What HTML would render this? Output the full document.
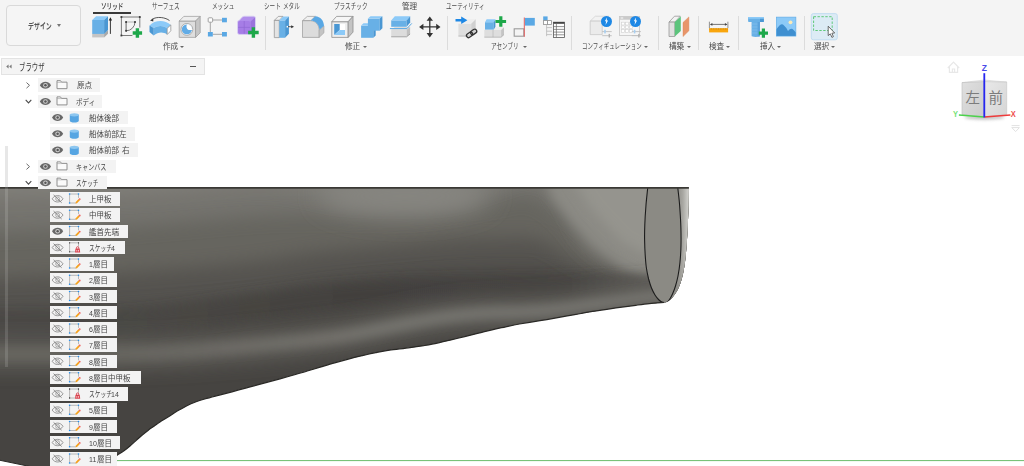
<!DOCTYPE html><html lang="ja"><head><meta charset="utf-8"><title>Fusion</title><style>
*{box-sizing:border-box;margin:0;padding:0}
html,body{width:1024px;height:466px;overflow:hidden;background:#fff}
body{font-family:"Liberation Sans","Noto Sans CJK JP",sans-serif;position:relative;color:#4a4a4a}
.abs{position:absolute}
.c{display:inline-block;transform-origin:0 50%}
#tb{position:absolute;left:0;top:0;width:1024px;height:56px;background:#f4f4f4}
.tab{position:absolute;top:2px;font-size:8px;line-height:10px;white-space:nowrap;color:#4a4a4a}
.lbl{position:absolute;top:42.4px;font-size:8px;line-height:10px;white-space:nowrap;color:#4c4c4c}
.arr{position:absolute;top:46px;width:0;height:0;border-left:2px solid transparent;border-right:2px solid transparent;border-top:2.5px solid #666}
.sep{position:absolute;top:16px;width:1px;height:34px;background:#dcdcdc}
.ic{position:absolute;top:14px;width:26px;height:26px}
.row{position:absolute;height:13px;background:#f3f3f3}
.rt{position:absolute;font-size:8px;line-height:13px;white-space:nowrap;color:#454545}
</style></head><body>
<div id="tb">
<div class="abs" style="left:6px;top:5px;width:75px;height:41px;border:1px solid #d9d9d9;border-radius:4px;background:#f5f5f5"></div>
<div class="abs" style="left:29.2px;top:21.2px;font-size:8.5px;line-height:10px;font-weight:bold;color:#555;white-space:nowrap"><span class="c" style="margin-left:-0.8px;transform:scaleX(0.7);margin-right:-10.20px">デザイン</span></div>
<div class="abs" style="left:56.6px;top:24.3px;width:0;height:0;border-left:2px solid transparent;border-right:2px solid transparent;border-top:3px solid #777"></div>
<div class="tab" style="left:101.3px;font-weight:500;color:#2e2e2e"><span class="c" style="margin-left:-0.8px;transform:scaleX(0.7);margin-right:-9.60px">ソリッド</span></div>
<div class="tab" style="left:153px"><span class="c" style="margin-left:-0.8px;transform:scaleX(0.7);margin-right:-12.00px">サーフェス</span></div>
<div class="tab" style="left:212.9px"><span class="c" style="margin-left:-0.8px;transform:scaleX(0.7);margin-right:-9.60px">メッシュ</span></div>
<div class="tab" style="left:264.8px"><span class="c" style="margin-left:-0.8px;transform:scaleX(0.7);margin-right:-7.20px">シート</span>&nbsp;<span class="c" style="transform:scaleX(0.7);margin-right:-7.20px">メタル</span></div>
<div class="tab" style="left:334.7px"><span class="c" style="margin-left:-0.8px;transform:scaleX(0.7);margin-right:-14.40px">プラスチック</span></div>
<div class="tab" style="left:401.5px"><span class="c" style="transform:scaleX(0.95);margin-right:-0.80px">管理</span></div>
<div class="tab" style="left:447.2px"><span class="c" style="margin-left:-0.8px;transform:scaleX(0.7);margin-right:-16.80px">ユーティリティ</span></div>
<div class="abs" style="left:92.5px;top:11.5px;width:38.5px;height:2px;background:#3a3a3a"></div>
<div class="lbl" style="left:163.4px"><span class="c" style="transform:scaleX(0.95);margin-right:-0.80px">作成</span></div><div class="arr" style="left:180.1px"></div>
<div class="lbl" style="left:345.2px"><span class="c" style="transform:scaleX(0.95);margin-right:-0.80px">修正</span></div><div class="arr" style="left:363px"></div>
<div class="lbl" style="left:491.7px"><span class="c" style="margin-left:-0.8px;transform:scaleX(0.7);margin-right:-12.00px">アセンブリ</span></div><div class="arr" style="left:522.5px"></div>
<div class="lbl" style="left:583.1px"><span class="c" style="margin-left:-0.8px;transform:scaleX(0.685);margin-right:-27.72px">コンフィギュレーション</span></div><div class="arr" style="left:644.4px"></div>
<div class="lbl" style="left:668.7px"><span class="c" style="transform:scaleX(0.95);margin-right:-0.80px">構築</span></div><div class="arr" style="left:686.6px"></div>
<div class="lbl" style="left:709.2px"><span class="c" style="transform:scaleX(0.95);margin-right:-0.80px">検査</span></div><div class="arr" style="left:726.2px"></div>
<div class="lbl" style="left:760.3px"><span class="c" style="transform:scaleX(0.95);margin-right:-0.80px">挿入</span></div><div class="arr" style="left:777px"></div>
<div class="lbl" style="left:814.2px"><span class="c" style="transform:scaleX(0.95);margin-right:-0.80px">選択</span></div><div class="arr" style="left:831.4px"></div>
<div class="sep" style="left:264.5px"></div>
<div class="sep" style="left:447px"></div>
<div class="sep" style="left:571px"></div>
<div class="sep" style="left:658px"></div>
<div class="sep" style="left:698px"></div>
<div class="sep" style="left:738px"></div>
<div class="sep" style="left:803.5px"></div>
<svg class="abs" style="left:0;top:0" width="1024" height="56" viewBox="0 0 1024 56">
<rect x="811.3" y="13.6" width="26" height="26.2" rx="2" fill="#dcebf5" stroke="#b9d8ef" stroke-width="0.8"/>
<path d="M92.2 33.9L104.1 33.9L104.1 37.4L92.2 37.4Z" fill="#c4c4c4" /><path d="M92.2 33.9L96.1 30.3L108.0 30.3L104.1 33.9Z" fill="#c4c4c4" /><path d="M104.1 33.9L108.0 30.3L108.0 33.8L104.1 37.4Z" fill="#a9a9a9" />
<path d="M92.2 20.0L104.1 20.0L104.1 33.9L92.2 33.9Z" fill="#68b0e6" /><path d="M92.2 20.0L96.1 16.2L108.0 16.2L104.1 20.0Z" fill="#8ccaf8" /><path d="M104.1 20.0L108.0 16.2L108.0 30.1L104.1 33.9Z" fill="#4a97d3" />
<path d="M110.4 19V33.9" stroke="#222" stroke-width="0.9"/><path d="M110.4 17.2L112.1 20.6H108.7Z" fill="#222"/>
<path d="M121.4 17H139.8M121.4 17V35.5M139.8 17V27.6M121.4 35.5H132.4" stroke="#6e6e6e" stroke-width="0.9" fill="none"/>
<rect x="120.5" y="16.1" width="1.8" height="1.8" fill="#3a3a3a"/>
<rect x="138.9" y="16.1" width="1.8" height="1.8" fill="#3a3a3a"/>
<rect x="120.5" y="34.6" width="1.8" height="1.8" fill="#3a3a3a"/>
<path d="M126.1 22H135" stroke="#bcbcbc" stroke-width="1.2"/><path d="M126.1 22V30.8" stroke="#555" stroke-width="0.9"/><path d="M135 22A8.9 8.9 0 0 1 126.1 30.8" stroke="#666" stroke-width="0.9" fill="none"/>
<rect x="125.19999999999999" y="21.1" width="1.8" height="1.8" fill="#3a3a3a"/>
<rect x="134.1" y="21.1" width="1.8" height="1.8" fill="#3a3a3a"/>
<rect x="125.19999999999999" y="29.900000000000002" width="1.8" height="1.8" fill="#3a3a3a"/>
<path d="M132.7 31.3H135.7V28.3H139.1V31.3H142.1V34.7H139.1V37.7H135.7V34.7H132.7Z" fill="#1ea84a"/>
<path d="M169.5 20.6C166 17.6 157 15.8 151.6 19.6" stroke="#444" stroke-width="0.9" fill="none"/><path d="M150 20.6L153.4 18.4L153.2 21.4Z" fill="#333"/>
<path d="M149.5 25.5C155 19.6 165 19.6 170.8 24.9L167.2 28.4C163 25.2 158 25.2 153.7 28.1Z" fill="#8ccaf8"/>
<path d="M153.7 28.1C158 25.2 163 25.2 167.2 28.4V34.5C163 31.6 158 31.8 153.7 35.6Z" fill="#68b0e6"/>
<path d="M149.5 25.5L153.7 28.1L153.7 35.6L149.5 32.0Z" fill="#4a97d3" />
<path d="M167.2 28.4L170.8 24.9L170.8 30.8L167.2 34.5Z" fill="#fff" stroke="#8a8a8a" stroke-width="0.7"/>
<path d="M179.2 21.0L195.6 21.0L195.6 37.4L179.2 37.4Z" fill="#dedede" stroke="#9a9a9a" stroke-width="0.7" stroke-linejoin="round"/><path d="M179.2 21.0L183.8 16.4L200.2 16.4L195.6 21.0Z" fill="#eeeeee" stroke="#9a9a9a" stroke-width="0.7" stroke-linejoin="round"/><path d="M195.6 21.0L200.2 16.4L200.2 32.8L195.6 37.4Z" fill="#c6c6c6" stroke="#9a9a9a" stroke-width="0.7" stroke-linejoin="round"/>
<circle cx="186.9" cy="29.4" r="5.9" fill="#fff" stroke="#9a9a9a" stroke-width="0.8"/>
<clipPath id="hcl"><circle cx="186.9" cy="29.4" r="5.2"/></clipPath><g clip-path="url(#hcl)"><circle cx="186.9" cy="29.4" r="5.2" fill="#62ace6"/><circle cx="190.2" cy="26.4" r="3.7" fill="#fff"/></g>
<path d="M212.7 20H222M210.3 22.3V32M212.7 34.3H222" stroke="#a6a6a6" stroke-width="1"/>
<rect x="208.2" y="17.8" width="4.4" height="4.4" rx="0.8" fill="#fff" stroke="#8c8c8c" stroke-width="0.8"/>
<rect x="222" y="17.8" width="4.9" height="4.5" fill="#5aa8e4"/>
<rect x="207.9" y="32" width="4.9" height="4.5" fill="#5aa8e4"/>
<rect x="222" y="32" width="4.9" height="4.5" fill="#5aa8e4"/>
<path d="M237.5 22.2Q237.5 20.4 239.4 20.2L242 17.2Q243 16.2 244.5 16.2H253.5Q255.5 16.2 255.5 18.2V28.5Q255.5 29.8 254.5 30.8L251.4 33.8Q250.6 34.4 249.4 34.4H239.5Q237.5 34.4 237.5 32.4Z" fill="#b18eec" stroke="#d9d2f3" stroke-width="0.8"/>
<rect x="238.2" y="21" width="12" height="12.8" rx="1.6" fill="#a67de6"/>
<path d="M244.2 21V33.8M238.2 27.4H250.2" stroke="#9168d4" stroke-width="0.7"/>
<path d="M250.6 21.6L255 17.4V28.8L250.6 33.2Z" fill="#9a72dc"/>
<path d="M248.1 30.8H251.7V27.2H255.1V30.8H258.7V34.2H255.1V37.8H251.7V34.2H248.1Z" fill="#1ea84a"/>
<path d="M274.3 20.4L278.3 16.4L283.0 16.4L279.3 20.4Z" fill="#f2f2f2" stroke="#8e8e8e" stroke-width="0.7"/>
<path d="M274.3 20.4L279.3 20.4L279.3 37.6L274.3 37.6Z" fill="#e4e4e4" stroke="#8e8e8e" stroke-width="0.7"/>
<path d="M279.3 20.4L285.1 20.4L285.1 37.8L279.3 37.8Z" fill="#68b0e6" /><path d="M279.3 20.4L283.1 16.4L288.9 16.4L285.1 20.4Z" fill="#8ccaf8" /><path d="M285.1 20.4L288.9 16.4L288.9 33.8L285.1 37.8Z" fill="#4a97d3" />
<rect x="286.6" y="25.9" width="1.6" height="1.6" fill="#fff"/><path d="M288 26.7H292" stroke="#333" stroke-width="0.8"/><path d="M294 26.7L291.2 25.2V28.2Z" fill="#333"/>
<path d="M302.5 20.7L307.3 16.4H315.3L310.8 20.7Z" fill="#f0f0f0" stroke="#9a9a9a" stroke-width="0.7"/>
<path d="M302.5 20.7H310.8C316 21.2 319 24.5 319.2 30V37.4H302.5Z" fill="#dcdcdc" stroke="#9a9a9a" stroke-width="0.7"/>
<path d="M319.2 30.0L324.0 25.8L324.0 32.8L319.2 37.4Z" fill="#c4c4c4" stroke="#9a9a9a" stroke-width="0.5"/>
<path d="M310.8 20.5L315.3 16.2C320.5 16.6 323.8 20.4 324 25.8L319.5 29.8C319.2 24.6 316 21 310.8 20.5Z" fill="#5aa8e4"/>
<path d="M331.8 21.7L348.2 21.7L348.2 37.4L331.8 37.4Z" fill="#eeeeee" stroke="#8e8e8e" stroke-width="0.8" stroke-linejoin="round"/><path d="M331.8 21.7L336.6 16.4L353.0 16.4L348.2 21.7Z" fill="#f6f6f6" stroke="#8e8e8e" stroke-width="0.8" stroke-linejoin="round"/><path d="M348.2 21.7L353.0 16.4L353.0 32.1L348.2 37.4Z" fill="#c4c4c4" stroke="#8e8e8e" stroke-width="0.8" stroke-linejoin="round"/>
<rect x="334.2" y="24.1" width="10.8" height="10.8" fill="#fff"/>
<path d="M334.2 24.1L339.7 24.1L339.7 30.0L334.2 34.9Z" fill="#4a97d3" />
<path d="M339.7 30.0L345.0 30.0L345.0 34.9L334.2 34.9Z" fill="#8ccaf8" />
<path d="M361.1 25.6L373.3 25.6L373.3 37.8L361.1 37.8Z" fill="#68b0e6" /><path d="M361.1 25.6L363.5 23.3L375.7 23.3L373.3 25.6Z" fill="#8ccaf8" /><path d="M373.3 25.6L375.7 23.3L375.7 35.5L373.3 37.8Z" fill="#4a97d3" />
<path d="M367.9 18.6L379.8 18.6L379.8 30.7L367.9 30.7Z" fill="#68b0e6" /><path d="M367.9 18.6L370.5 16.2L382.4 16.2L379.8 18.6Z" fill="#8ccaf8" /><path d="M379.8 18.6L382.4 16.2L382.4 28.3L379.8 30.7Z" fill="#4a97d3" />
<path d="M391.2 29.7L406.6 29.7L406.6 36.8L391.2 36.8Z" fill="#dcdcdc" /><path d="M391.2 29.7L394.7 26.9L410.1 26.9L406.6 29.7Z" fill="#dcdcdc" /><path d="M406.6 29.7L410.1 26.9L410.1 34.0L406.6 36.8Z" fill="#c0c0c0" />
<path d="M391.2 36.8H406.6L410.1 34" stroke="#8a8a8a" stroke-width="0.7" fill="none"/>
<path d="M391.2 20.4L406.6 20.4L406.6 26.8L391.2 26.8Z" fill="#68b0e6" /><path d="M391.2 20.4L394.8 16.2L410.2 16.2L406.6 20.4Z" fill="#8ccaf8" /><path d="M406.6 20.4L410.2 16.2L410.2 22.6L406.6 26.8Z" fill="#4a97d3" />
<path d="M389.9 28.6H406.9L411.8 23.4" stroke="#5aa8e4" stroke-width="1" fill="none"/>
<path d="M421.8 26.9H437.8M429.8 18.9V34.9" stroke="#333" stroke-width="1.3"/>
<path d="M419.1 26.9L423.40000000000003 23.7V30.099999999999998ZM440.5 26.9L436.2 23.7V30.099999999999998ZM429.8 16.4L426.6 20.7H433.0ZM429.8 37.4L426.6 33.1H433.0Z" fill="#333"/>
<path d="M458.4 23.7L471.2 23.7L471.2 36.1L458.4 36.1Z" fill="#dedede" /><path d="M458.4 23.7L462.9 19.3L475.7 19.3L471.2 23.7Z" fill="#eeeeee" /><path d="M471.2 23.7L475.7 19.3L475.7 31.7L471.2 36.1Z" fill="#d0d0d0" />
<path d="M458.4 36.1H471.2" stroke="#a0a0a0" stroke-width="0.6"/>
<path d="M455.5 19H461.2V16.6L467.4 20.3L461.2 24V21.6H455.5Z" fill="#1e88e5"/>
<g transform="rotate(-35 471.6 33.4)" fill="none" stroke="#333" stroke-width="1.3"><rect x="465.8" y="31.4" width="6.6" height="4" rx="2"/><rect x="470.8" y="31.4" width="6.6" height="4" rx="2"/></g>
<path d="M484.3 29.9L501.1 29.9L501.1 37.2L484.3 37.2Z" fill="#dedede" /><path d="M484.3 29.9L487.2 27.3L504.0 27.3L501.1 29.9Z" fill="#eeeeee" /><path d="M501.1 29.9L504.0 27.3L504.0 34.6L501.1 37.2Z" fill="#c4c4c4" />
<path d="M493 29.9V37.2" stroke="#bdbdbd" stroke-width="0.8"/><path d="M484.3 37.2H501.1L504 34.6" stroke="#a0a0a0" stroke-width="0.6" fill="none"/>
<path d="M485.0 22.2L493.8 22.2L493.8 29.6L485.0 29.6Z" fill="#68b0e6" /><path d="M485.0 22.2L486.6 19.3L495.4 19.3L493.8 22.2Z" fill="#8ccaf8" /><path d="M493.8 22.2L495.4 19.3L495.4 26.7L493.8 29.6Z" fill="#4a97d3" />
<path d="M495.5 19.9H499.2V16.2H502.4V19.9H506.1V23.1H502.4V26.8H499.2V23.1H495.5Z" fill="#1ea84a"/>
<rect x="514.2" y="28.8" width="9.6" height="7.4" fill="#f4f4f4" stroke="#9a9a9a" stroke-width="1.1"/>
<rect x="525" y="17.9" width="9.8" height="7.7" fill="#5aa8e4"/>
<path d="M524.3 17.5V36.8" stroke="#e05a5a" stroke-width="1"/>
<rect x="543.2" y="16.4" width="4.4" height="4.2" fill="#5aa8e4"/>
<rect x="543.5" y="20.6" width="4" height="3.9" fill="#fff" stroke="#8e8e8e" stroke-width="0.8"/><rect x="547.5" y="20.6" width="4" height="3.9" fill="#fff" stroke="#8e8e8e" stroke-width="0.8"/>
<path d="M546.6 24.6V36.2M546.6 27.6H552M546.6 31.2H552M546.6 34.6H552" stroke="#b8b8b8" stroke-width="0.8" fill="none"/>
<rect x="553.4" y="22.2" width="11" height="15.2" fill="#fff" stroke="#555" stroke-width="0.8"/><rect x="553.4" y="22" width="11" height="1.8" fill="#444"/>
<path d="M556.4 23.8V37.4M553.4 26.6H564.4M553.4 29.4H564.4M553.4 32.1H564.4M553.4 34.8H564.4" stroke="#666" stroke-width="0.7"/>
<path d="M590.2 21.1L595.3 16.2L608.8 16.2L602.2 21.1Z" fill="#f2f2f2" stroke="#cfcfcf" stroke-width="0.7"/>
<path d="M590.2 21.1L602.2 21.1L602.2 34.6L590.2 34.6Z" fill="#ebebeb" stroke="#c8c8c8" stroke-width="0.8"/>
<circle cx="606.5" cy="21.5" r="5.5" fill="#1e88e5"/><path d="M606.9 17.6L604.9 21.2H606.2L605.5 25L608.1 20.6H606.7Z" fill="#fff"/><path d="M602.2 31.6H611.7M602.2 35.7H611.7" stroke="#bdbdbd" stroke-width="0.9"/><rect x="604.2" y="29.8" width="1.6" height="3.6" fill="#a8d0f2"/><rect x="608.6" y="33.9" width="1.4" height="3.6" fill="#b0b0b0"/>
<rect x="619.6" y="16.4" width="20" height="19" fill="#f6f6f6" stroke="#c6c6c6" stroke-width="0.8"/><rect x="619.6" y="16.4" width="20" height="3.3" fill="#cacaca"/><rect x="620.6" y="17.4" width="2.6" height="1.2" fill="#f2f2f2"/>
<rect x="621.6" y="22.2" width="3" height="2.8" fill="#fff" stroke="#d0d0d0" stroke-width="0.6"/>
<rect x="621.6" y="25.9" width="3" height="2.8" fill="#fff" stroke="#d0d0d0" stroke-width="0.6"/>
<rect x="621.6" y="29.6" width="3" height="2.8" fill="#fff" stroke="#d0d0d0" stroke-width="0.6"/>
<rect x="625.5" y="22.2" width="3" height="2.8" fill="#fff" stroke="#d0d0d0" stroke-width="0.6"/>
<rect x="625.5" y="25.9" width="3" height="2.8" fill="#fff" stroke="#d0d0d0" stroke-width="0.6"/>
<rect x="625.5" y="29.6" width="3" height="2.8" fill="#fff" stroke="#d0d0d0" stroke-width="0.6"/>
<rect x="629.4" y="22.2" width="3" height="2.8" fill="#fff" stroke="#d0d0d0" stroke-width="0.6"/>
<rect x="629.4" y="25.9" width="3" height="2.8" fill="#fff" stroke="#d0d0d0" stroke-width="0.6"/>
<rect x="629.4" y="29.6" width="3" height="2.8" fill="#fff" stroke="#d0d0d0" stroke-width="0.6"/>
<circle cx="635.5" cy="21.5" r="5.5" fill="#1e88e5"/><path d="M635.9 17.6L633.9 21.2H635.2L634.5 25L637.1 20.6H635.7Z" fill="#fff"/><path d="M631.8 31.6H640.9M631.8 35.7H640.9" stroke="#bdbdbd" stroke-width="0.9"/><rect x="633.8" y="29.8" width="1.6" height="3.6" fill="#a8d0f2"/><rect x="638.1999999999999" y="33.9" width="1.4" height="3.6" fill="#b0b0b0"/>
<path d="M669.0 22.1L674.5 16.2L680.3 16.2L674.8 22.1Z" fill="#f2f2f2" stroke="#8e8e8e" stroke-width="0.7"/>
<path d="M669.0 22.1L674.8 22.1L674.8 36.5L669.0 36.5Z" fill="#e0e0e0" stroke="#8e8e8e" stroke-width="0.7"/>
<path d="M674.8 22.1L680.8 16.6L680.8 31.0L674.8 36.6Z" fill="#5cc47c" />
<path d="M683.0 22.5L688.9 16.9L688.9 30.8L683.0 36.6Z" fill="#e8956a" stroke="#d9834f" stroke-width="0.4"/>
<rect x="709.1" y="28.2" width="19" height="4.2" fill="#f9a60e"/>
<path d="M709.90 28.2V29.6M711.62 28.2V29.6M713.34 28.2V29.6M715.06 28.2V29.6M716.78 28.2V29.6M718.50 28.2V29.6M720.22 28.2V29.6M721.94 28.2V29.6M723.66 28.2V29.6M725.38 28.2V29.6M727.10 28.2V29.6" stroke="#c27c00" stroke-width="0.6"/>
<path d="M709.4 21.7V28M727.9 21.7V28" stroke="#777" stroke-width="0.8"/><path d="M711 24.4H726.4" stroke="#555" stroke-width="0.8"/><path d="M709.9 24.4L712.4 23.1V25.7ZM727.4 24.4L724.9 23.1V25.7Z" fill="#444"/>
<rect x="748.1" y="17.1" width="15.7" height="4.9" rx="0.8" fill="#68b0e6"/><rect x="748.1" y="17.1" width="15.7" height="1.7" rx="0.8" fill="#8ccaf8"/><rect x="760" y="18.8" width="3.8" height="3.2" fill="#4a97d3"/>
<path d="M751.6 22H759.9V36.2Q755.8 37.6 751.6 36.2Z" fill="#68b0e6"/><path d="M751.6 24H759.9M751.6 27H759.9M751.6 30H759.9M751.6 33H759.9" stroke="#8cc4ee" stroke-width="0.6"/><rect x="757.6" y="22" width="2.3" height="14.4" fill="#5aa2dc"/>
<path d="M758.8 31.5H761.8V28.5H765.0V31.5H768.0V34.7H765.0V37.7H761.8V34.7H758.8Z" fill="#1ea84a"/>
<rect x="776.3" y="17.1" width="19.6" height="19" fill="#8ccaf8"/>
<path d="M776.3 29.5Q781 22.5 783.5 25Q786 27 788 31Q790.5 27.8 792.5 29Q794 30 795.9 32.5V36.1H776.3Z" fill="#3f8fd0"/>
<circle cx="790.5" cy="22.3" r="1.9" fill="#fbeab8"/><rect x="776.3" y="17.1" width="19.6" height="19" fill="none" stroke="#5aa8e4" stroke-width="0.6"/>
<rect x="813.6" y="16.7" width="18.6" height="13.8" fill="none" stroke="#5fc97a" stroke-width="1" stroke-dasharray="2.4 1.5"/>
<path d="M828.2 26.2V35.6L830.3 33.8L831.9 37.4L833.4 36.7L831.9 33.2L834.7 33Z" fill="#fff" stroke="#4a4a4a" stroke-width="0.8" stroke-linejoin="round"/>
</svg>
</div>
<svg class="abs" style="left:0;top:0" width="1024" height="466" viewBox="0 0 1024 466">
<defs>
<clipPath id="hc"><path d="M-5 187L688.9 187C688.9 190.0 688.8 198.7 688.6 205.0C688.4 211.3 688.1 218.3 687.8 225.0C687.5 231.7 687.1 238.8 686.6 245.0C686.1 251.2 685.7 256.8 685.0 262.0C684.3 267.2 683.6 271.7 682.5 276.0C681.4 280.3 680.2 284.4 678.5 288.0C676.8 291.6 674.3 295.2 672.5 297.5C670.7 299.8 668.9 300.8 667.5 301.6C666.1 302.4 667.0 302.1 664.0 302.4C661.0 302.7 654.1 303.1 649.4 303.6C644.7 304.1 640.3 304.7 635.7 305.3C631.1 305.9 626.5 306.5 622.0 307.1C617.5 307.7 612.9 308.4 608.4 309.1C603.9 309.8 599.3 310.5 594.7 311.2C590.1 311.9 585.6 312.7 581.0 313.5C576.4 314.3 571.8 315.0 567.3 315.8C562.8 316.6 558.2 317.5 553.7 318.3C549.2 319.1 545.7 319.7 540.0 320.6C534.3 321.6 525.1 323.0 519.4 324.0C513.7 325.0 510.3 325.8 505.7 326.8C501.1 327.8 496.6 328.7 492.0 329.8C487.4 330.9 482.9 332.1 478.4 333.2C473.8 334.3 469.3 335.5 464.7 336.6C460.1 337.7 455.6 338.8 451.0 339.9C446.4 341.0 441.9 342.1 437.3 343.1C432.8 344.1 428.2 344.9 423.7 345.7C419.1 346.4 415.7 346.9 410.0 347.6C404.3 348.4 395.1 349.4 389.4 350.2C383.7 351.0 380.3 351.7 375.7 352.6C371.1 353.5 366.6 354.6 362.0 355.7C357.4 356.8 352.9 357.9 348.4 359.1C343.8 360.3 339.3 361.5 334.7 362.8C330.1 364.1 325.6 365.5 321.0 366.9C316.4 368.3 311.9 369.6 307.3 371.0C302.8 372.4 298.2 373.7 293.7 375.0C289.1 376.3 285.7 377.2 280.0 378.8C274.3 380.4 265.1 382.8 259.4 384.4C253.7 385.9 250.3 386.9 245.7 388.1C241.1 389.3 236.6 390.6 232.0 391.8C227.4 393.0 223.0 394.1 218.4 395.3C213.8 396.5 209.3 397.6 204.7 399.0C200.1 400.4 195.1 402.0 191.0 403.8C186.9 405.6 183.2 407.8 180.0 409.6C176.8 411.4 174.3 413.0 172.0 414.4C169.7 415.8 168.0 416.9 166.0 418.2C164.0 419.5 162.0 420.7 160.0 422.0C158.0 423.3 156.0 424.8 154.0 426.2C152.0 427.6 150.0 428.9 148.0 430.4C146.0 431.9 144.0 433.5 142.0 435.2C140.0 436.9 138.0 438.8 136.0 440.6C134.0 442.4 132.0 444.3 130.0 446.0C128.0 447.7 126.1 449.3 124.0 450.8C121.9 452.3 120.1 453.3 117.4 455.0C114.7 456.7 111.2 458.5 108.0 461.0C104.8 463.5 99.7 468.5 98.0 470.0L-5 470Z"/></clipPath>
<linearGradient id="hb" x1="0" y1="187" x2="0" y2="466" gradientUnits="userSpaceOnUse"><stop offset="0" stop-color="#7d7c77"/><stop offset="0.12" stop-color="#757470"/><stop offset="0.3" stop-color="#5f5d59"/><stop offset="0.45" stop-color="#4b4945"/><stop offset="0.6" stop-color="#5a5854"/><stop offset="0.75" stop-color="#484643"/><stop offset="1" stop-color="#464441"/></linearGradient>
<linearGradient id="rb" x1="677" y1="0" x2="689" y2="0" gradientUnits="userSpaceOnUse"><stop offset="0" stop-color="#8f8e89"/><stop offset="0.5" stop-color="#a9a8a3"/><stop offset="1" stop-color="#d4d4d0"/></linearGradient>
<filter id="b5" filterUnits="userSpaceOnUse" x="-80" y="80" width="900" height="460"><feGaussianBlur stdDeviation="5"/></filter>
<filter id="b6" filterUnits="userSpaceOnUse" x="-80" y="80" width="900" height="460"><feGaussianBlur stdDeviation="6"/></filter>
<filter id="b8" filterUnits="userSpaceOnUse" x="-80" y="80" width="900" height="460"><feGaussianBlur stdDeviation="8"/></filter>
<filter id="b9" filterUnits="userSpaceOnUse" x="-80" y="80" width="900" height="460"><feGaussianBlur stdDeviation="9"/></filter>
<filter id="b12" filterUnits="userSpaceOnUse" x="-80" y="80" width="900" height="460"><feGaussianBlur stdDeviation="12"/></filter>
<filter id="b14" filterUnits="userSpaceOnUse" x="-80" y="80" width="900" height="460"><feGaussianBlur stdDeviation="14"/></filter>
<linearGradient id="bg" x1="120" y1="0" x2="380" y2="0" gradientUnits="userSpaceOnUse"><stop offset="0" stop-color="#686661"/><stop offset="1" stop-color="#76746f"/></linearGradient>
<linearGradient id="dg" x1="100" y1="0" x2="650" y2="0" gradientUnits="userSpaceOnUse"><stop offset="0" stop-color="#4b4946"/><stop offset="0.45" stop-color="#43413e"/><stop offset="0.85" stop-color="#444240"/><stop offset="1" stop-color="#5c5a56"/></linearGradient>
</defs>
<rect x="110" y="460" width="914" height="1.1" fill="#79c279"/>
<g clip-path="url(#hc)">
<rect x="-5" y="187" width="700" height="290" fill="#464441"/>
<path d="M-40.0 312.0C-33.3 312.0 -28.3 312.7 0.0 312.0C28.3 311.3 88.3 310.7 130.0 308.0C171.7 305.3 218.3 300.0 250.0 296.0C281.7 292.0 295.0 287.5 320.0 284.0C345.0 280.5 378.3 277.0 400.0 275.0C421.7 273.0 433.3 272.8 450.0 272.0C466.7 271.2 485.0 270.3 500.0 270.0C515.0 269.7 526.7 269.0 540.0 270.0C553.3 271.0 566.7 274.2 580.0 276.0C593.3 277.8 608.3 279.8 620.0 281.0C631.7 282.2 636.7 282.3 650.0 283.0C663.3 283.7 691.7 284.7 700.0 285.0L700 120L-40 120Z" fill="#55534f" filter="url(#b9)"/>
<path d="M-40.0 278.0C-33.3 278.0 -28.3 279.0 0.0 278.0C28.3 277.0 88.3 274.7 130.0 272.0C171.7 269.3 218.3 265.3 250.0 262.0C281.7 258.7 295.0 254.8 320.0 252.0C345.0 249.2 378.3 247.0 400.0 245.0C421.7 243.0 433.3 241.2 450.0 240.0C466.7 238.8 485.0 238.0 500.0 238.0C515.0 238.0 526.7 236.0 540.0 240.0C553.3 244.0 566.7 256.3 580.0 262.0C593.3 267.7 608.3 271.3 620.0 274.0C631.7 276.7 636.7 277.0 650.0 278.0C663.3 279.0 691.7 279.7 700.0 280.0L700 120L-40 120Z" fill="#66655f" filter="url(#b9)"/>
<path d="M-40.0 232.0C-33.3 232.0 -28.3 233.0 0.0 232.0C28.3 231.0 88.3 228.7 130.0 226.0C171.7 223.3 218.3 218.0 250.0 216.0C281.7 214.0 295.0 214.2 320.0 214.0C345.0 213.8 378.3 215.7 400.0 215.0C421.7 214.3 433.3 212.5 450.0 210.0C466.7 207.5 486.7 202.3 500.0 200.0C513.3 197.7 520.0 193.5 530.0 196.0C540.0 198.5 550.0 206.0 560.0 215.0C570.0 224.0 580.0 241.5 590.0 250.0C600.0 258.5 610.0 262.3 620.0 266.0C630.0 269.7 636.7 270.5 650.0 272.0C663.3 273.5 691.7 274.5 700.0 275.0L700 120L-40 120Z" fill="#74736e" filter="url(#b9)"/>
<path d="M-40.0 200.0C-33.3 199.7 -28.3 198.8 0.0 198.0C28.3 197.2 88.3 197.0 130.0 195.0C171.7 193.0 221.7 186.8 250.0 186.0C278.3 185.2 285.0 188.0 300.0 190.0C315.0 192.0 323.3 196.3 340.0 198.0C356.7 199.7 381.7 200.0 400.0 200.0C418.3 200.0 435.0 200.3 450.0 198.0C465.0 195.7 476.7 189.8 490.0 186.0C503.3 182.2 518.3 174.3 530.0 175.0C541.7 175.7 550.8 180.0 560.0 190.0C569.2 200.0 575.8 223.7 585.0 235.0C594.2 246.3 604.2 252.8 615.0 258.0C625.8 263.2 635.8 264.0 650.0 266.0C664.2 268.0 691.7 269.3 700.0 270.0L700 120L-40 120Z" fill="#807f79" filter="url(#b9)"/>
<ellipse cx="405" cy="196" rx="85" ry="20" fill="#868580" filter="url(#b12)"/>
<path d="M543 170L660 170L660 284L625 268L595 246L570 220L552 198Z" fill="#8b8a84" filter="url(#b6)"/>
<path d="M566 170L660 170L660 262L622 242L592 210Z" fill="#95948e" filter="url(#b6)"/>
<path d="M-40.0 327.0C-33.3 327.0 -28.3 327.5 0.0 327.0C28.3 326.5 88.3 327.3 130.0 324.0C171.7 320.7 218.3 311.3 250.0 307.0C281.7 302.7 295.0 300.5 320.0 298.0C345.0 295.5 370.0 293.3 400.0 292.0C430.0 290.7 466.7 290.7 500.0 290.0C533.3 289.3 575.0 288.5 600.0 288.0C625.0 287.5 633.3 287.3 650.0 287.0C666.7 286.7 691.7 286.2 700.0 286.0" stroke="url(#dg)" stroke-width="21" fill="none" filter="url(#b6)"/>
<path d="M-40.0 354.0C-33.3 354.0 -31.7 354.2 0.0 354.0C31.7 353.8 108.3 354.3 150.0 353.0C191.7 351.7 219.0 348.7 250.0 346.0C281.0 343.3 309.3 340.8 336.0 337.0C362.7 333.2 391.8 326.3 410.0 323.0C428.2 319.7 433.3 318.6 445.0 317.0C456.7 315.4 467.5 314.3 480.0 313.5C492.5 312.7 508.0 312.6 520.0 312.0C532.0 311.4 538.7 311.4 552.0 310.0C565.3 308.6 583.8 305.7 600.0 303.5C616.2 301.3 632.3 298.9 649.0 297.0C665.7 295.1 691.5 292.8 700.0 292.0" stroke="#5f5d59" stroke-width="30" fill="none" filter="url(#b9)"/>
<path d="M-40.0 354.0C-33.3 354.0 -31.7 354.2 0.0 354.0C31.7 353.8 108.3 354.3 150.0 353.0C191.7 351.7 219.0 348.7 250.0 346.0C281.0 343.3 309.3 340.8 336.0 337.0C362.7 333.2 391.8 326.3 410.0 323.0C428.2 319.7 433.3 318.6 445.0 317.0C456.7 315.4 467.5 314.3 480.0 313.5C492.5 312.7 508.0 312.6 520.0 312.0C532.0 311.4 538.7 311.4 552.0 310.0C565.3 308.6 583.8 305.7 600.0 303.5C616.2 301.3 632.3 298.9 649.0 297.0C665.7 295.1 691.5 292.8 700.0 292.0" stroke="url(#bg)" stroke-width="11" fill="none" filter="url(#b5)"/>
</g>
<g clip-path="url(#hc)"><rect x="670" y="187" width="20" height="120" fill="url(#rb)"/>
<path d="M648.4 180.0C648.3 181.2 648.2 182.8 647.8 187.0C647.4 191.2 646.5 198.7 646.0 205.0C645.5 211.3 645.0 219.2 644.8 225.0C644.6 230.8 644.5 235.0 644.6 240.0C644.7 245.0 644.9 250.3 645.2 255.0C645.5 259.7 645.8 264.0 646.4 268.0C647.0 272.0 647.8 275.7 648.6 279.0C649.5 282.3 650.4 285.3 651.5 288.0C652.6 290.7 653.8 293.0 655.0 295.0C656.2 297.0 657.7 298.7 659.0 300.0C660.3 301.3 661.8 302.2 663.0 302.6C664.2 303.0 665.4 303.1 666.5 302.6C667.6 302.1 668.5 300.9 669.5 299.5C670.5 298.1 671.5 296.2 672.5 294.0C673.5 291.8 674.6 289.0 675.5 286.0C676.4 283.0 677.2 280.0 678.0 276.0C678.8 272.0 679.5 267.2 680.0 262.0C680.5 256.8 680.9 250.7 681.0 245.0C681.1 239.3 681.1 234.7 680.9 228.0C680.7 221.3 680.1 211.8 679.6 205.0C679.1 198.2 678.1 191.2 677.7 187.0C677.3 182.8 677.1 181.2 677.0 180.0Z" fill="#8b8a84" stroke="#1c1c1c" stroke-width="1.1"/></g>
<path d="M-5 187.8L688.9 187.8" stroke="#3a3935" stroke-width="1.8" fill="none"/>
<path d="M664.0 302.4C661.6 302.6 654.1 303.1 649.4 303.6C644.7 304.1 640.3 304.7 635.7 305.3C631.1 305.9 626.5 306.5 622.0 307.1C617.5 307.7 612.9 308.4 608.4 309.1C603.9 309.8 599.3 310.5 594.7 311.2C590.1 311.9 585.6 312.7 581.0 313.5C576.4 314.3 571.8 315.0 567.3 315.8C562.8 316.6 558.2 317.5 553.7 318.3C549.2 319.1 545.7 319.7 540.0 320.6C534.3 321.6 525.1 323.0 519.4 324.0C513.7 325.0 510.3 325.8 505.7 326.8C501.1 327.8 496.6 328.7 492.0 329.8C487.4 330.9 482.9 332.1 478.4 333.2C473.8 334.3 469.3 335.5 464.7 336.6C460.1 337.7 455.6 338.8 451.0 339.9C446.4 341.0 441.9 342.1 437.3 343.1C432.8 344.1 428.2 344.9 423.7 345.7C419.1 346.4 415.7 346.9 410.0 347.6C404.3 348.4 395.1 349.4 389.4 350.2C383.7 351.0 380.3 351.7 375.7 352.6C371.1 353.5 366.6 354.6 362.0 355.7C357.4 356.8 352.9 357.9 348.4 359.1C343.8 360.3 339.3 361.5 334.7 362.8C330.1 364.1 325.6 365.5 321.0 366.9C316.4 368.3 311.9 369.6 307.3 371.0C302.8 372.4 298.2 373.7 293.7 375.0C289.1 376.3 285.7 377.2 280.0 378.8C274.3 380.4 265.1 382.8 259.4 384.4C253.7 385.9 250.3 386.9 245.7 388.1C241.1 389.3 236.6 390.6 232.0 391.8C227.4 393.0 223.0 394.1 218.4 395.3C213.8 396.5 209.3 397.6 204.7 399.0C200.1 400.4 195.1 402.0 191.0 403.8C186.9 405.6 183.2 407.8 180.0 409.6C176.8 411.4 174.3 413.0 172.0 414.4C169.7 415.8 168.0 416.9 166.0 418.2C164.0 419.5 162.0 420.7 160.0 422.0C158.0 423.3 156.0 424.8 154.0 426.2C152.0 427.6 150.0 428.9 148.0 430.4C146.0 431.9 144.0 433.5 142.0 435.2C140.0 436.9 138.0 438.8 136.0 440.6C134.0 442.4 132.0 444.3 130.0 446.0C128.0 447.7 126.1 449.3 124.0 450.8C121.9 452.3 120.1 453.3 117.4 455.0C114.7 456.7 111.2 458.5 108.0 461.0C104.8 463.5 99.7 468.5 98.0 470.0" stroke="#2a2926" stroke-width="1.2" fill="none"/>
<path d="M0 460.3L30 466.5L0 466.5Z" fill="#fff"/><path d="M0 460.3L30 466.5" stroke="#2a2926" stroke-width="1"/>
</svg>
<div class="abs" style="left:1px;top:58px;width:204px;height:17px;background:#f4f4f4;border:1px solid #e3e3e3"></div>
<div class="abs" style="left:20.2px;top:60.5px;font-size:10px;line-height:13px;color:#3a3a3a;white-space:nowrap"><span class="c" style="margin-left:-0.8px;transform:scaleX(0.64);margin-right:-14.40px">ブラウザ</span></div>
<div class="abs" style="left:190px;top:66px;width:6px;height:1px;background:#555"></div>
<svg class="abs" style="left:5.5px;top:64.2px" width="6" height="5" viewBox="0 0 6 5"><path d="M2.6 0.4V4.4L0.2 2.4ZM5.6 0.4V4.4L3.2 2.4Z" fill="#7a7a7a"/></svg>
<div class="abs" style="left:5px;top:146px;width:3px;height:41px;background:#e7e7e7"></div><div class="abs" style="left:5px;top:187px;width:3px;height:180px;background:rgba(255,255,255,0.13)"></div>
<div class="row" style="left:38px;top:78.30px;width:61.8px;height:13.5px"></div>
<svg class="abs" style="left:25px;top:81px" width="6" height="8" viewBox="0 0 6 8"><g transform="translate(0.70 0.85)"><path d="M0.8 0.7L3.8 3.5L0.8 6.3" fill="none" stroke="#6a6a6a" stroke-width="1"/></g></svg>
<svg class="abs" style="left:39px;top:81px" width="13" height="9" viewBox="0 0 13 9"><g transform="translate(0.45 0.30)"><path d="M0.4 4C2 1.4 4 0.5 6 0.5S10 1.4 11.6 4C10 6.6 8 7.5 6 7.5S2 6.6 0.4 4Z" fill="#686868"/><circle cx="6" cy="4" r="2.3" fill="#cfcfcf"/><circle cx="6" cy="4" r="1.25" fill="#555"/></g></svg>
<svg class="abs" style="left:56px;top:80px" width="12" height="10" viewBox="0 0 12 10"><g transform="translate(0.50 0.15)"><path d="M0.5 8.5V0.5H4L5 2H10.5V8.5Z" fill="#fafafa" stroke="#858585" stroke-width="0.9"/><path d="M0.5 2.2H5" stroke="#9a9a9a" stroke-width="0.6"/></g></svg>
<div class="rt" style="left:77.1px;top:79.40px;line-height:13.5px"><span class="c" style="transform:scaleX(0.94);margin-right:-0.96px">原点</span></div>
<div class="row" style="left:38px;top:94.55px;width:63.8px;height:13.5px"></div>
<svg class="abs" style="left:25px;top:99px" width="8" height="6" viewBox="0 0 8 6"><g transform="translate(0.00 0.10)"><path d="M0.7 0.8L3.5 3.8L6.3 0.8" fill="none" stroke="#4a4a4a" stroke-width="1.1"/></g></svg>
<svg class="abs" style="left:39px;top:97px" width="13" height="9" viewBox="0 0 13 9"><g transform="translate(0.45 0.55)"><path d="M0.4 4C2 1.4 4 0.5 6 0.5S10 1.4 11.6 4C10 6.6 8 7.5 6 7.5S2 6.6 0.4 4Z" fill="#686868"/><circle cx="6" cy="4" r="2.3" fill="#cfcfcf"/><circle cx="6" cy="4" r="1.25" fill="#555"/></g></svg>
<svg class="abs" style="left:56px;top:96px" width="12" height="10" viewBox="0 0 12 10"><g transform="translate(0.50 0.40)"><path d="M0.5 8.5V0.5H4L5 2H10.5V8.5Z" fill="#fafafa" stroke="#858585" stroke-width="0.9"/><path d="M0.5 2.2H5" stroke="#9a9a9a" stroke-width="0.6"/></g></svg>
<div class="rt" style="left:77.1px;top:95.65px;line-height:13.5px"><span class="c" style="margin-left:-0.8px;transform:scaleX(0.82);margin-right:-4.32px">ボディ</span></div>
<div class="row" style="left:50px;top:110.80px;width:77.8px;height:13.5px"></div>
<svg class="abs" style="left:51px;top:113px" width="13" height="9" viewBox="0 0 13 9"><g transform="translate(0.60 0.50)"><path d="M0.4 4C2 1.4 4 0.5 6 0.5S10 1.4 11.6 4C10 6.6 8 7.5 6 7.5S2 6.6 0.4 4Z" fill="#686868"/><circle cx="6" cy="4" r="2.3" fill="#cfcfcf"/><circle cx="6" cy="4" r="1.25" fill="#555"/></g></svg>
<svg class="abs" style="left:69px;top:113px" width="10" height="11" viewBox="0 0 10 11"><g transform="translate(0.80 0.15)"><path d="M0 1.6V7.6C0 8.6 2 9.4 4.5 9.4S9 8.6 9 7.6V1.6Z" fill="#56a5e2"/><ellipse cx="4.5" cy="1.7" rx="4.5" ry="1.7" fill="#8cc6f0"/></g></svg>
<div class="rt" style="left:89.4px;top:111.90px;line-height:13.5px"><span class="c" style="transform:scaleX(0.94);margin-right:-1.92px">船体後部</span></div>
<div class="row" style="left:50px;top:127.05px;width:85.2px;height:13.5px"></div>
<svg class="abs" style="left:51px;top:129px" width="13" height="9" viewBox="0 0 13 9"><g transform="translate(0.60 0.75)"><path d="M0.4 4C2 1.4 4 0.5 6 0.5S10 1.4 11.6 4C10 6.6 8 7.5 6 7.5S2 6.6 0.4 4Z" fill="#686868"/><circle cx="6" cy="4" r="2.3" fill="#cfcfcf"/><circle cx="6" cy="4" r="1.25" fill="#555"/></g></svg>
<svg class="abs" style="left:69px;top:129px" width="10" height="11" viewBox="0 0 10 11"><g transform="translate(0.80 0.40)"><path d="M0 1.6V7.6C0 8.6 2 9.4 4.5 9.4S9 8.6 9 7.6V1.6Z" fill="#56a5e2"/><ellipse cx="4.5" cy="1.7" rx="4.5" ry="1.7" fill="#8cc6f0"/></g></svg>
<div class="rt" style="left:89.4px;top:128.15px;line-height:13.5px"><span class="c" style="transform:scaleX(0.94);margin-right:-2.40px">船体前部左</span></div>
<div class="row" style="left:50px;top:143.30px;width:88.2px;height:13.5px"></div>
<svg class="abs" style="left:51px;top:146px" width="13" height="9" viewBox="0 0 13 9"><g transform="translate(0.60 0.00)"><path d="M0.4 4C2 1.4 4 0.5 6 0.5S10 1.4 11.6 4C10 6.6 8 7.5 6 7.5S2 6.6 0.4 4Z" fill="#686868"/><circle cx="6" cy="4" r="2.3" fill="#cfcfcf"/><circle cx="6" cy="4" r="1.25" fill="#555"/></g></svg>
<svg class="abs" style="left:69px;top:145px" width="10" height="11" viewBox="0 0 10 11"><g transform="translate(0.80 0.65)"><path d="M0 1.6V7.6C0 8.6 2 9.4 4.5 9.4S9 8.6 9 7.6V1.6Z" fill="#56a5e2"/><ellipse cx="4.5" cy="1.7" rx="4.5" ry="1.7" fill="#8cc6f0"/></g></svg>
<div class="rt" style="left:89.4px;top:144.40px;line-height:13.5px"><span class="c" style="transform:scaleX(0.94);margin-right:-1.92px">船体前部</span>&nbsp;<span class="c" style="transform:scaleX(0.94);margin-right:-0.48px">右</span></div>
<div class="row" style="left:38px;top:159.55px;width:77.7px;height:13.5px"></div>
<svg class="abs" style="left:25px;top:163px" width="6" height="8" viewBox="0 0 6 8"><g transform="translate(0.70 0.10)"><path d="M0.8 0.7L3.8 3.5L0.8 6.3" fill="none" stroke="#6a6a6a" stroke-width="1"/></g></svg>
<svg class="abs" style="left:39px;top:162px" width="13" height="9" viewBox="0 0 13 9"><g transform="translate(0.45 0.55)"><path d="M0.4 4C2 1.4 4 0.5 6 0.5S10 1.4 11.6 4C10 6.6 8 7.5 6 7.5S2 6.6 0.4 4Z" fill="#686868"/><circle cx="6" cy="4" r="2.3" fill="#cfcfcf"/><circle cx="6" cy="4" r="1.25" fill="#555"/></g></svg>
<svg class="abs" style="left:56px;top:161px" width="12" height="10" viewBox="0 0 12 10"><g transform="translate(0.50 0.40)"><path d="M0.5 8.5V0.5H4L5 2H10.5V8.5Z" fill="#fafafa" stroke="#858585" stroke-width="0.9"/><path d="M0.5 2.2H5" stroke="#9a9a9a" stroke-width="0.6"/></g></svg>
<div class="rt" style="left:77.1px;top:160.65px;line-height:13.5px"><span class="c" style="margin-left:-0.8px;transform:scaleX(0.76);margin-right:-9.60px">キャンバス</span></div>
<div class="row" style="left:38px;top:175.80px;width:69.4px;height:13.5px"></div>
<svg class="abs" style="left:25px;top:180px" width="8" height="6" viewBox="0 0 8 6"><g transform="translate(0.00 0.35)"><path d="M0.7 0.8L3.5 3.8L6.3 0.8" fill="none" stroke="#4a4a4a" stroke-width="1.1"/></g></svg>
<svg class="abs" style="left:39px;top:178px" width="13" height="9" viewBox="0 0 13 9"><g transform="translate(0.45 0.80)"><path d="M0.4 4C2 1.4 4 0.5 6 0.5S10 1.4 11.6 4C10 6.6 8 7.5 6 7.5S2 6.6 0.4 4Z" fill="#686868"/><circle cx="6" cy="4" r="2.3" fill="#cfcfcf"/><circle cx="6" cy="4" r="1.25" fill="#555"/></g></svg>
<svg class="abs" style="left:56px;top:177px" width="12" height="10" viewBox="0 0 12 10"><g transform="translate(0.50 0.65)"><path d="M0.5 8.5V0.5H4L5 2H10.5V8.5Z" fill="#fafafa" stroke="#858585" stroke-width="0.9"/><path d="M0.5 2.2H5" stroke="#9a9a9a" stroke-width="0.6"/></g></svg>
<div class="rt" style="left:77.1px;top:176.90px;line-height:13.5px"><span class="c" style="margin-left:-0.8px;transform:scaleX(0.7);margin-right:-9.60px">スケッチ</span></div>
<div class="row" style="left:50px;top:192.05px;width:69.9px;height:13.5px"></div>
<svg class="abs" style="left:51px;top:194px" width="13" height="10" viewBox="0 0 13 10"><g transform="translate(0.60 0.30)"><path d="M0.6 4.5C2 2.2 4 1.3 6 1.3S10 2.2 11.4 4.5C10 6.8 8 7.7 6 7.7S2 6.8 0.6 4.5Z" fill="none" stroke="#929292" stroke-width="0.95"/><circle cx="6" cy="4.5" r="1.9" fill="none" stroke="#a2a2a2" stroke-width="0.9"/><path d="M2 0.6L10 8.4" stroke="#868686" stroke-width="1"/></g></svg>
<svg class="abs" style="left:68px;top:193px" width="14" height="13" viewBox="0 0 14 13"><g transform="translate(0.60 0.10)"><path d="M1 0.9H9.9M1 0.9V9.9M9.9 0.9V4.8M1 9.9H6.4" stroke="#a8a8a8" stroke-width="0.8" fill="none"/><circle cx="1" cy="0.9" r="0.8" fill="#1e8ff5"/><circle cx="9.9" cy="0.9" r="0.8" fill="#1e8ff5"/><circle cx="1" cy="9.9" r="0.8" fill="#1e8ff5"/><path d="M7.11 8.81L6.9 10.3L8.39 10.09L11.3 7.18L10.02 5.9Z" fill="#f6a21e"/><path d="M10.02 5.9L11.3 7.18L11.75 6.73A0.9 0.9 0 0 0 10.47 5.45Z" fill="#ef5b5b"/><path d="M6.9 10.3L7.0 9.5L7.7 10.2Z" fill="#777"/></g></svg>
<div class="rt" style="left:89.3px;top:193.15px;line-height:13.5px"><span class="c" style="transform:scaleX(0.94);margin-right:-1.44px">上甲板</span></div>
<div class="row" style="left:50px;top:208.30px;width:69.9px;height:13.5px"></div>
<svg class="abs" style="left:51px;top:210px" width="13" height="10" viewBox="0 0 13 10"><g transform="translate(0.60 0.55)"><path d="M0.6 4.5C2 2.2 4 1.3 6 1.3S10 2.2 11.4 4.5C10 6.8 8 7.7 6 7.7S2 6.8 0.6 4.5Z" fill="none" stroke="#929292" stroke-width="0.95"/><circle cx="6" cy="4.5" r="1.9" fill="none" stroke="#a2a2a2" stroke-width="0.9"/><path d="M2 0.6L10 8.4" stroke="#868686" stroke-width="1"/></g></svg>
<svg class="abs" style="left:68px;top:209px" width="14" height="13" viewBox="0 0 14 13"><g transform="translate(0.60 0.40)"><path d="M1 0.9H9.9M1 0.9V9.9M9.9 0.9V4.8M1 9.9H6.4" stroke="#a8a8a8" stroke-width="0.8" fill="none"/><circle cx="1" cy="0.9" r="0.8" fill="#1e8ff5"/><circle cx="9.9" cy="0.9" r="0.8" fill="#1e8ff5"/><circle cx="1" cy="9.9" r="0.8" fill="#1e8ff5"/><path d="M7.11 8.81L6.9 10.3L8.39 10.09L11.3 7.18L10.02 5.9Z" fill="#f6a21e"/><path d="M10.02 5.9L11.3 7.18L11.75 6.73A0.9 0.9 0 0 0 10.47 5.45Z" fill="#ef5b5b"/><path d="M6.9 10.3L7.0 9.5L7.7 10.2Z" fill="#777"/></g></svg>
<div class="rt" style="left:89.3px;top:209.40px;line-height:13.5px"><span class="c" style="transform:scaleX(0.94);margin-right:-1.44px">中甲板</span></div>
<div class="row" style="left:50px;top:224.55px;width:77.9px;height:13.5px"></div>
<svg class="abs" style="left:51px;top:227px" width="13" height="9" viewBox="0 0 13 9"><g transform="translate(0.60 0.25)"><path d="M0.4 4C2 1.4 4 0.5 6 0.5S10 1.4 11.6 4C10 6.6 8 7.5 6 7.5S2 6.6 0.4 4Z" fill="#686868"/><circle cx="6" cy="4" r="2.3" fill="#cfcfcf"/><circle cx="6" cy="4" r="1.25" fill="#555"/></g></svg>
<svg class="abs" style="left:68px;top:225px" width="14" height="13" viewBox="0 0 14 13"><g transform="translate(0.60 0.60)"><path d="M1 0.9H9.9M1 0.9V9.9M9.9 0.9V4.8M1 9.9H6.4" stroke="#a8a8a8" stroke-width="0.8" fill="none"/><circle cx="1" cy="0.9" r="0.8" fill="#1e8ff5"/><circle cx="9.9" cy="0.9" r="0.8" fill="#1e8ff5"/><circle cx="1" cy="9.9" r="0.8" fill="#1e8ff5"/><path d="M7.11 8.81L6.9 10.3L8.39 10.09L11.3 7.18L10.02 5.9Z" fill="#f6a21e"/><path d="M10.02 5.9L11.3 7.18L11.75 6.73A0.9 0.9 0 0 0 10.47 5.45Z" fill="#ef5b5b"/><path d="M6.9 10.3L7.0 9.5L7.7 10.2Z" fill="#777"/></g></svg>
<div class="rt" style="left:89.3px;top:225.65px;line-height:13.5px"><span class="c" style="transform:scaleX(0.94);margin-right:-1.92px">艦首先端</span></div>
<div class="row" style="left:50px;top:240.80px;width:74.9px;height:13.5px"></div>
<svg class="abs" style="left:51px;top:243px" width="13" height="10" viewBox="0 0 13 10"><g transform="translate(0.60 0.05)"><path d="M0.6 4.5C2 2.2 4 1.3 6 1.3S10 2.2 11.4 4.5C10 6.8 8 7.7 6 7.7S2 6.8 0.6 4.5Z" fill="none" stroke="#929292" stroke-width="0.95"/><circle cx="6" cy="4.5" r="1.9" fill="none" stroke="#a2a2a2" stroke-width="0.9"/><path d="M2 0.6L10 8.4" stroke="#868686" stroke-width="1"/></g></svg>
<svg class="abs" style="left:68px;top:241px" width="14" height="13" viewBox="0 0 14 13"><g transform="translate(0.60 0.90)"><path d="M1 0.9H9.9M1 0.9V9.9M9.9 0.9V4.8M1 9.9H6.4" stroke="#a8a8a8" stroke-width="0.8" fill="none"/><circle cx="1" cy="0.9" r="0.65" fill="#2b2b2b"/><circle cx="9.9" cy="0.9" r="0.65" fill="#2b2b2b"/><circle cx="1" cy="9.9" r="0.65" fill="#2b2b2b"/><path d="M6.9 6.6H11.1L11.6 10.7H6.4Z" fill="#d9434e"/><path d="M7.9 6.8V5.9A1.1 1.1 0 0 1 10.1 5.9V6.8" stroke="#d9434e" stroke-width="0.9" fill="none"/><rect x="7.7" y="8" width="1" height="1.6" fill="#f3c4c8"/><rect x="9.4" y="8" width="1" height="1.6" fill="#f3c4c8"/></g></svg>
<div class="rt" style="left:89.3px;top:241.90px;line-height:13.5px"><span class="c" style="margin-left:-0.8px;transform:scaleX(0.715);margin-right:-9.12px">スケッチ</span><span class="c" style="transform:scaleX(0.88);margin-right:-0.53px">4</span></div>
<div class="row" style="left:50px;top:257.05px;width:64.2px;height:13.5px"></div>
<svg class="abs" style="left:51px;top:259px" width="13" height="10" viewBox="0 0 13 10"><g transform="translate(0.60 0.30)"><path d="M0.6 4.5C2 2.2 4 1.3 6 1.3S10 2.2 11.4 4.5C10 6.8 8 7.7 6 7.7S2 6.8 0.6 4.5Z" fill="none" stroke="#929292" stroke-width="0.95"/><circle cx="6" cy="4.5" r="1.9" fill="none" stroke="#a2a2a2" stroke-width="0.9"/><path d="M2 0.6L10 8.4" stroke="#868686" stroke-width="1"/></g></svg>
<svg class="abs" style="left:68px;top:258px" width="14" height="13" viewBox="0 0 14 13"><g transform="translate(0.60 0.10)"><path d="M1 0.9H9.9M1 0.9V9.9M9.9 0.9V4.8M1 9.9H6.4" stroke="#a8a8a8" stroke-width="0.8" fill="none"/><circle cx="1" cy="0.9" r="0.8" fill="#1e8ff5"/><circle cx="9.9" cy="0.9" r="0.8" fill="#1e8ff5"/><circle cx="1" cy="9.9" r="0.8" fill="#1e8ff5"/><path d="M7.11 8.81L6.9 10.3L8.39 10.09L11.3 7.18L10.02 5.9Z" fill="#f6a21e"/><path d="M10.02 5.9L11.3 7.18L11.75 6.73A0.9 0.9 0 0 0 10.47 5.45Z" fill="#ef5b5b"/><path d="M6.9 10.3L7.0 9.5L7.7 10.2Z" fill="#777"/></g></svg>
<div class="rt" style="left:89.3px;top:258.15px;line-height:13.5px"><span class="c" style="transform:scaleX(0.88);margin-right:-0.53px">1</span><span class="c" style="transform:scaleX(0.94);margin-right:-0.96px">層目</span></div>
<div class="row" style="left:50px;top:273.30px;width:66.7px;height:13.5px"></div>
<svg class="abs" style="left:51px;top:275px" width="13" height="10" viewBox="0 0 13 10"><g transform="translate(0.60 0.55)"><path d="M0.6 4.5C2 2.2 4 1.3 6 1.3S10 2.2 11.4 4.5C10 6.8 8 7.7 6 7.7S2 6.8 0.6 4.5Z" fill="none" stroke="#929292" stroke-width="0.95"/><circle cx="6" cy="4.5" r="1.9" fill="none" stroke="#a2a2a2" stroke-width="0.9"/><path d="M2 0.6L10 8.4" stroke="#868686" stroke-width="1"/></g></svg>
<svg class="abs" style="left:68px;top:274px" width="14" height="13" viewBox="0 0 14 13"><g transform="translate(0.60 0.40)"><path d="M1 0.9H9.9M1 0.9V9.9M9.9 0.9V4.8M1 9.9H6.4" stroke="#a8a8a8" stroke-width="0.8" fill="none"/><circle cx="1" cy="0.9" r="0.8" fill="#1e8ff5"/><circle cx="9.9" cy="0.9" r="0.8" fill="#1e8ff5"/><circle cx="1" cy="9.9" r="0.8" fill="#1e8ff5"/><path d="M7.11 8.81L6.9 10.3L8.39 10.09L11.3 7.18L10.02 5.9Z" fill="#f6a21e"/><path d="M10.02 5.9L11.3 7.18L11.75 6.73A0.9 0.9 0 0 0 10.47 5.45Z" fill="#ef5b5b"/><path d="M6.9 10.3L7.0 9.5L7.7 10.2Z" fill="#777"/></g></svg>
<div class="rt" style="left:89.3px;top:274.40px;line-height:13.5px"><span class="c" style="transform:scaleX(0.88);margin-right:-0.53px">2</span><span class="c" style="transform:scaleX(0.94);margin-right:-0.96px">層目</span></div>
<div class="row" style="left:50px;top:289.55px;width:66.7px;height:13.5px"></div>
<svg class="abs" style="left:51px;top:291px" width="13" height="10" viewBox="0 0 13 10"><g transform="translate(0.60 0.80)"><path d="M0.6 4.5C2 2.2 4 1.3 6 1.3S10 2.2 11.4 4.5C10 6.8 8 7.7 6 7.7S2 6.8 0.6 4.5Z" fill="none" stroke="#929292" stroke-width="0.95"/><circle cx="6" cy="4.5" r="1.9" fill="none" stroke="#a2a2a2" stroke-width="0.9"/><path d="M2 0.6L10 8.4" stroke="#868686" stroke-width="1"/></g></svg>
<svg class="abs" style="left:68px;top:290px" width="14" height="13" viewBox="0 0 14 13"><g transform="translate(0.60 0.60)"><path d="M1 0.9H9.9M1 0.9V9.9M9.9 0.9V4.8M1 9.9H6.4" stroke="#a8a8a8" stroke-width="0.8" fill="none"/><circle cx="1" cy="0.9" r="0.8" fill="#1e8ff5"/><circle cx="9.9" cy="0.9" r="0.8" fill="#1e8ff5"/><circle cx="1" cy="9.9" r="0.8" fill="#1e8ff5"/><path d="M7.11 8.81L6.9 10.3L8.39 10.09L11.3 7.18L10.02 5.9Z" fill="#f6a21e"/><path d="M10.02 5.9L11.3 7.18L11.75 6.73A0.9 0.9 0 0 0 10.47 5.45Z" fill="#ef5b5b"/><path d="M6.9 10.3L7.0 9.5L7.7 10.2Z" fill="#777"/></g></svg>
<div class="rt" style="left:89.3px;top:290.65px;line-height:13.5px"><span class="c" style="transform:scaleX(0.88);margin-right:-0.53px">3</span><span class="c" style="transform:scaleX(0.94);margin-right:-0.96px">層目</span></div>
<div class="row" style="left:50px;top:305.80px;width:66.7px;height:13.5px"></div>
<svg class="abs" style="left:51px;top:308px" width="13" height="10" viewBox="0 0 13 10"><g transform="translate(0.60 0.05)"><path d="M0.6 4.5C2 2.2 4 1.3 6 1.3S10 2.2 11.4 4.5C10 6.8 8 7.7 6 7.7S2 6.8 0.6 4.5Z" fill="none" stroke="#929292" stroke-width="0.95"/><circle cx="6" cy="4.5" r="1.9" fill="none" stroke="#a2a2a2" stroke-width="0.9"/><path d="M2 0.6L10 8.4" stroke="#868686" stroke-width="1"/></g></svg>
<svg class="abs" style="left:68px;top:306px" width="14" height="13" viewBox="0 0 14 13"><g transform="translate(0.60 0.90)"><path d="M1 0.9H9.9M1 0.9V9.9M9.9 0.9V4.8M1 9.9H6.4" stroke="#a8a8a8" stroke-width="0.8" fill="none"/><circle cx="1" cy="0.9" r="0.8" fill="#1e8ff5"/><circle cx="9.9" cy="0.9" r="0.8" fill="#1e8ff5"/><circle cx="1" cy="9.9" r="0.8" fill="#1e8ff5"/><path d="M7.11 8.81L6.9 10.3L8.39 10.09L11.3 7.18L10.02 5.9Z" fill="#f6a21e"/><path d="M10.02 5.9L11.3 7.18L11.75 6.73A0.9 0.9 0 0 0 10.47 5.45Z" fill="#ef5b5b"/><path d="M6.9 10.3L7.0 9.5L7.7 10.2Z" fill="#777"/></g></svg>
<div class="rt" style="left:89.3px;top:306.90px;line-height:13.5px"><span class="c" style="transform:scaleX(0.88);margin-right:-0.53px">4</span><span class="c" style="transform:scaleX(0.94);margin-right:-0.96px">層目</span></div>
<div class="row" style="left:50px;top:322.05px;width:66.7px;height:13.5px"></div>
<svg class="abs" style="left:51px;top:324px" width="13" height="10" viewBox="0 0 13 10"><g transform="translate(0.60 0.30)"><path d="M0.6 4.5C2 2.2 4 1.3 6 1.3S10 2.2 11.4 4.5C10 6.8 8 7.7 6 7.7S2 6.8 0.6 4.5Z" fill="none" stroke="#929292" stroke-width="0.95"/><circle cx="6" cy="4.5" r="1.9" fill="none" stroke="#a2a2a2" stroke-width="0.9"/><path d="M2 0.6L10 8.4" stroke="#868686" stroke-width="1"/></g></svg>
<svg class="abs" style="left:68px;top:323px" width="14" height="13" viewBox="0 0 14 13"><g transform="translate(0.60 0.10)"><path d="M1 0.9H9.9M1 0.9V9.9M9.9 0.9V4.8M1 9.9H6.4" stroke="#a8a8a8" stroke-width="0.8" fill="none"/><circle cx="1" cy="0.9" r="0.8" fill="#1e8ff5"/><circle cx="9.9" cy="0.9" r="0.8" fill="#1e8ff5"/><circle cx="1" cy="9.9" r="0.8" fill="#1e8ff5"/><path d="M7.11 8.81L6.9 10.3L8.39 10.09L11.3 7.18L10.02 5.9Z" fill="#f6a21e"/><path d="M10.02 5.9L11.3 7.18L11.75 6.73A0.9 0.9 0 0 0 10.47 5.45Z" fill="#ef5b5b"/><path d="M6.9 10.3L7.0 9.5L7.7 10.2Z" fill="#777"/></g></svg>
<div class="rt" style="left:89.3px;top:323.15px;line-height:13.5px"><span class="c" style="transform:scaleX(0.88);margin-right:-0.53px">6</span><span class="c" style="transform:scaleX(0.94);margin-right:-0.96px">層目</span></div>
<div class="row" style="left:50px;top:338.30px;width:66.7px;height:13.5px"></div>
<svg class="abs" style="left:51px;top:340px" width="13" height="10" viewBox="0 0 13 10"><g transform="translate(0.60 0.55)"><path d="M0.6 4.5C2 2.2 4 1.3 6 1.3S10 2.2 11.4 4.5C10 6.8 8 7.7 6 7.7S2 6.8 0.6 4.5Z" fill="none" stroke="#929292" stroke-width="0.95"/><circle cx="6" cy="4.5" r="1.9" fill="none" stroke="#a2a2a2" stroke-width="0.9"/><path d="M2 0.6L10 8.4" stroke="#868686" stroke-width="1"/></g></svg>
<svg class="abs" style="left:68px;top:339px" width="14" height="13" viewBox="0 0 14 13"><g transform="translate(0.60 0.40)"><path d="M1 0.9H9.9M1 0.9V9.9M9.9 0.9V4.8M1 9.9H6.4" stroke="#a8a8a8" stroke-width="0.8" fill="none"/><circle cx="1" cy="0.9" r="0.8" fill="#1e8ff5"/><circle cx="9.9" cy="0.9" r="0.8" fill="#1e8ff5"/><circle cx="1" cy="9.9" r="0.8" fill="#1e8ff5"/><path d="M7.11 8.81L6.9 10.3L8.39 10.09L11.3 7.18L10.02 5.9Z" fill="#f6a21e"/><path d="M10.02 5.9L11.3 7.18L11.75 6.73A0.9 0.9 0 0 0 10.47 5.45Z" fill="#ef5b5b"/><path d="M6.9 10.3L7.0 9.5L7.7 10.2Z" fill="#777"/></g></svg>
<div class="rt" style="left:89.3px;top:339.40px;line-height:13.5px"><span class="c" style="transform:scaleX(0.88);margin-right:-0.53px">7</span><span class="c" style="transform:scaleX(0.94);margin-right:-0.96px">層目</span></div>
<div class="row" style="left:50px;top:354.55px;width:66.7px;height:13.5px"></div>
<svg class="abs" style="left:51px;top:356px" width="13" height="10" viewBox="0 0 13 10"><g transform="translate(0.60 0.80)"><path d="M0.6 4.5C2 2.2 4 1.3 6 1.3S10 2.2 11.4 4.5C10 6.8 8 7.7 6 7.7S2 6.8 0.6 4.5Z" fill="none" stroke="#929292" stroke-width="0.95"/><circle cx="6" cy="4.5" r="1.9" fill="none" stroke="#a2a2a2" stroke-width="0.9"/><path d="M2 0.6L10 8.4" stroke="#868686" stroke-width="1"/></g></svg>
<svg class="abs" style="left:68px;top:355px" width="14" height="13" viewBox="0 0 14 13"><g transform="translate(0.60 0.60)"><path d="M1 0.9H9.9M1 0.9V9.9M9.9 0.9V4.8M1 9.9H6.4" stroke="#a8a8a8" stroke-width="0.8" fill="none"/><circle cx="1" cy="0.9" r="0.8" fill="#1e8ff5"/><circle cx="9.9" cy="0.9" r="0.8" fill="#1e8ff5"/><circle cx="1" cy="9.9" r="0.8" fill="#1e8ff5"/><path d="M7.11 8.81L6.9 10.3L8.39 10.09L11.3 7.18L10.02 5.9Z" fill="#f6a21e"/><path d="M10.02 5.9L11.3 7.18L11.75 6.73A0.9 0.9 0 0 0 10.47 5.45Z" fill="#ef5b5b"/><path d="M6.9 10.3L7.0 9.5L7.7 10.2Z" fill="#777"/></g></svg>
<div class="rt" style="left:89.3px;top:355.65px;line-height:13.5px"><span class="c" style="transform:scaleX(0.88);margin-right:-0.53px">8</span><span class="c" style="transform:scaleX(0.94);margin-right:-0.96px">層目</span></div>
<div class="row" style="left:50px;top:370.80px;width:91.2px;height:13.5px"></div>
<svg class="abs" style="left:51px;top:373px" width="13" height="10" viewBox="0 0 13 10"><g transform="translate(0.60 0.05)"><path d="M0.6 4.5C2 2.2 4 1.3 6 1.3S10 2.2 11.4 4.5C10 6.8 8 7.7 6 7.7S2 6.8 0.6 4.5Z" fill="none" stroke="#929292" stroke-width="0.95"/><circle cx="6" cy="4.5" r="1.9" fill="none" stroke="#a2a2a2" stroke-width="0.9"/><path d="M2 0.6L10 8.4" stroke="#868686" stroke-width="1"/></g></svg>
<svg class="abs" style="left:68px;top:371px" width="14" height="13" viewBox="0 0 14 13"><g transform="translate(0.60 0.90)"><path d="M1 0.9H9.9M1 0.9V9.9M9.9 0.9V4.8M1 9.9H6.4" stroke="#a8a8a8" stroke-width="0.8" fill="none"/><circle cx="1" cy="0.9" r="0.8" fill="#1e8ff5"/><circle cx="9.9" cy="0.9" r="0.8" fill="#1e8ff5"/><circle cx="1" cy="9.9" r="0.8" fill="#1e8ff5"/><path d="M7.11 8.81L6.9 10.3L8.39 10.09L11.3 7.18L10.02 5.9Z" fill="#f6a21e"/><path d="M10.02 5.9L11.3 7.18L11.75 6.73A0.9 0.9 0 0 0 10.47 5.45Z" fill="#ef5b5b"/><path d="M6.9 10.3L7.0 9.5L7.7 10.2Z" fill="#777"/></g></svg>
<div class="rt" style="left:89.3px;top:371.90px;line-height:13.5px"><span class="c" style="transform:scaleX(0.88);margin-right:-0.53px">8</span><span class="c" style="transform:scaleX(0.94);margin-right:-2.40px">層目中甲板</span></div>
<div class="row" style="left:50px;top:387.05px;width:77.8px;height:13.5px"></div>
<svg class="abs" style="left:51px;top:389px" width="13" height="10" viewBox="0 0 13 10"><g transform="translate(0.60 0.30)"><path d="M0.6 4.5C2 2.2 4 1.3 6 1.3S10 2.2 11.4 4.5C10 6.8 8 7.7 6 7.7S2 6.8 0.6 4.5Z" fill="none" stroke="#929292" stroke-width="0.95"/><circle cx="6" cy="4.5" r="1.9" fill="none" stroke="#a2a2a2" stroke-width="0.9"/><path d="M2 0.6L10 8.4" stroke="#868686" stroke-width="1"/></g></svg>
<svg class="abs" style="left:68px;top:388px" width="14" height="13" viewBox="0 0 14 13"><g transform="translate(0.60 0.10)"><path d="M1 0.9H9.9M1 0.9V9.9M9.9 0.9V4.8M1 9.9H6.4" stroke="#a8a8a8" stroke-width="0.8" fill="none"/><circle cx="1" cy="0.9" r="0.65" fill="#2b2b2b"/><circle cx="9.9" cy="0.9" r="0.65" fill="#2b2b2b"/><circle cx="1" cy="9.9" r="0.65" fill="#2b2b2b"/><path d="M6.9 6.6H11.1L11.6 10.7H6.4Z" fill="#d9434e"/><path d="M7.9 6.8V5.9A1.1 1.1 0 0 1 10.1 5.9V6.8" stroke="#d9434e" stroke-width="0.9" fill="none"/><rect x="7.7" y="8" width="1" height="1.6" fill="#f3c4c8"/><rect x="9.4" y="8" width="1" height="1.6" fill="#f3c4c8"/></g></svg>
<div class="rt" style="left:89.3px;top:388.15px;line-height:13.5px"><span class="c" style="margin-left:-0.8px;transform:scaleX(0.715);margin-right:-9.12px">スケッチ</span><span class="c" style="transform:scaleX(0.88);margin-right:-1.07px">14</span></div>
<div class="row" style="left:50px;top:403.30px;width:66.7px;height:13.5px"></div>
<svg class="abs" style="left:51px;top:405px" width="13" height="10" viewBox="0 0 13 10"><g transform="translate(0.60 0.55)"><path d="M0.6 4.5C2 2.2 4 1.3 6 1.3S10 2.2 11.4 4.5C10 6.8 8 7.7 6 7.7S2 6.8 0.6 4.5Z" fill="none" stroke="#929292" stroke-width="0.95"/><circle cx="6" cy="4.5" r="1.9" fill="none" stroke="#a2a2a2" stroke-width="0.9"/><path d="M2 0.6L10 8.4" stroke="#868686" stroke-width="1"/></g></svg>
<svg class="abs" style="left:68px;top:404px" width="14" height="13" viewBox="0 0 14 13"><g transform="translate(0.60 0.40)"><path d="M1 0.9H9.9M1 0.9V9.9M9.9 0.9V4.8M1 9.9H6.4" stroke="#a8a8a8" stroke-width="0.8" fill="none"/><circle cx="1" cy="0.9" r="0.8" fill="#1e8ff5"/><circle cx="9.9" cy="0.9" r="0.8" fill="#1e8ff5"/><circle cx="1" cy="9.9" r="0.8" fill="#1e8ff5"/><path d="M7.11 8.81L6.9 10.3L8.39 10.09L11.3 7.18L10.02 5.9Z" fill="#f6a21e"/><path d="M10.02 5.9L11.3 7.18L11.75 6.73A0.9 0.9 0 0 0 10.47 5.45Z" fill="#ef5b5b"/><path d="M6.9 10.3L7.0 9.5L7.7 10.2Z" fill="#777"/></g></svg>
<div class="rt" style="left:89.3px;top:404.40px;line-height:13.5px"><span class="c" style="transform:scaleX(0.88);margin-right:-0.53px">5</span><span class="c" style="transform:scaleX(0.94);margin-right:-0.96px">層目</span></div>
<div class="row" style="left:50px;top:419.55px;width:66.7px;height:13.5px"></div>
<svg class="abs" style="left:51px;top:421px" width="13" height="10" viewBox="0 0 13 10"><g transform="translate(0.60 0.80)"><path d="M0.6 4.5C2 2.2 4 1.3 6 1.3S10 2.2 11.4 4.5C10 6.8 8 7.7 6 7.7S2 6.8 0.6 4.5Z" fill="none" stroke="#929292" stroke-width="0.95"/><circle cx="6" cy="4.5" r="1.9" fill="none" stroke="#a2a2a2" stroke-width="0.9"/><path d="M2 0.6L10 8.4" stroke="#868686" stroke-width="1"/></g></svg>
<svg class="abs" style="left:68px;top:420px" width="14" height="13" viewBox="0 0 14 13"><g transform="translate(0.60 0.60)"><path d="M1 0.9H9.9M1 0.9V9.9M9.9 0.9V4.8M1 9.9H6.4" stroke="#a8a8a8" stroke-width="0.8" fill="none"/><circle cx="1" cy="0.9" r="0.8" fill="#1e8ff5"/><circle cx="9.9" cy="0.9" r="0.8" fill="#1e8ff5"/><circle cx="1" cy="9.9" r="0.8" fill="#1e8ff5"/><path d="M7.11 8.81L6.9 10.3L8.39 10.09L11.3 7.18L10.02 5.9Z" fill="#f6a21e"/><path d="M10.02 5.9L11.3 7.18L11.75 6.73A0.9 0.9 0 0 0 10.47 5.45Z" fill="#ef5b5b"/><path d="M6.9 10.3L7.0 9.5L7.7 10.2Z" fill="#777"/></g></svg>
<div class="rt" style="left:89.3px;top:420.65px;line-height:13.5px"><span class="c" style="transform:scaleX(0.88);margin-right:-0.53px">9</span><span class="c" style="transform:scaleX(0.94);margin-right:-0.96px">層目</span></div>
<div class="row" style="left:50px;top:435.80px;width:69.8px;height:13.5px"></div>
<svg class="abs" style="left:51px;top:438px" width="13" height="10" viewBox="0 0 13 10"><g transform="translate(0.60 0.05)"><path d="M0.6 4.5C2 2.2 4 1.3 6 1.3S10 2.2 11.4 4.5C10 6.8 8 7.7 6 7.7S2 6.8 0.6 4.5Z" fill="none" stroke="#929292" stroke-width="0.95"/><circle cx="6" cy="4.5" r="1.9" fill="none" stroke="#a2a2a2" stroke-width="0.9"/><path d="M2 0.6L10 8.4" stroke="#868686" stroke-width="1"/></g></svg>
<svg class="abs" style="left:68px;top:436px" width="14" height="13" viewBox="0 0 14 13"><g transform="translate(0.60 0.90)"><path d="M1 0.9H9.9M1 0.9V9.9M9.9 0.9V4.8M1 9.9H6.4" stroke="#a8a8a8" stroke-width="0.8" fill="none"/><circle cx="1" cy="0.9" r="0.8" fill="#1e8ff5"/><circle cx="9.9" cy="0.9" r="0.8" fill="#1e8ff5"/><circle cx="1" cy="9.9" r="0.8" fill="#1e8ff5"/><path d="M7.11 8.81L6.9 10.3L8.39 10.09L11.3 7.18L10.02 5.9Z" fill="#f6a21e"/><path d="M10.02 5.9L11.3 7.18L11.75 6.73A0.9 0.9 0 0 0 10.47 5.45Z" fill="#ef5b5b"/><path d="M6.9 10.3L7.0 9.5L7.7 10.2Z" fill="#777"/></g></svg>
<div class="rt" style="left:89.3px;top:436.90px;line-height:13.5px"><span class="c" style="transform:scaleX(0.88);margin-right:-1.07px">10</span><span class="c" style="transform:scaleX(0.94);margin-right:-0.96px">層目</span></div>
<div class="row" style="left:50px;top:452.05px;width:66.8px;height:13.5px"></div>
<svg class="abs" style="left:51px;top:454px" width="13" height="10" viewBox="0 0 13 10"><g transform="translate(0.60 0.30)"><path d="M0.6 4.5C2 2.2 4 1.3 6 1.3S10 2.2 11.4 4.5C10 6.8 8 7.7 6 7.7S2 6.8 0.6 4.5Z" fill="none" stroke="#929292" stroke-width="0.95"/><circle cx="6" cy="4.5" r="1.9" fill="none" stroke="#a2a2a2" stroke-width="0.9"/><path d="M2 0.6L10 8.4" stroke="#868686" stroke-width="1"/></g></svg>
<svg class="abs" style="left:68px;top:453px" width="14" height="13" viewBox="0 0 14 13"><g transform="translate(0.60 0.10)"><path d="M1 0.9H9.9M1 0.9V9.9M9.9 0.9V4.8M1 9.9H6.4" stroke="#a8a8a8" stroke-width="0.8" fill="none"/><circle cx="1" cy="0.9" r="0.8" fill="#1e8ff5"/><circle cx="9.9" cy="0.9" r="0.8" fill="#1e8ff5"/><circle cx="1" cy="9.9" r="0.8" fill="#1e8ff5"/><path d="M7.11 8.81L6.9 10.3L8.39 10.09L11.3 7.18L10.02 5.9Z" fill="#f6a21e"/><path d="M10.02 5.9L11.3 7.18L11.75 6.73A0.9 0.9 0 0 0 10.47 5.45Z" fill="#ef5b5b"/><path d="M6.9 10.3L7.0 9.5L7.7 10.2Z" fill="#777"/></g></svg>
<div class="rt" style="left:89.3px;top:453.15px;line-height:13.5px"><span class="c" style="transform:scaleX(0.88);margin-right:-1.07px">11</span><span class="c" style="transform:scaleX(0.94);margin-right:-0.96px">層目</span></div>
<div class="row" style="left:50px;top:468.30px;width:48.4px;height:13.5px"></div>
<svg class="abs" style="left:940px;top:56px" width="84" height="80" viewBox="940 56 84 80">
<defs><linearGradient id="cl" x1="0" y1="0" x2="1" y2="1"><stop offset="0" stop-color="#e0e0e0"/><stop offset="1" stop-color="#cbcbcb"/></linearGradient><linearGradient id="cr" x1="0" y1="0" x2="1" y2="1"><stop offset="0" stop-color="#e9e9e9"/><stop offset="1" stop-color="#d5d5d5"/></linearGradient><filter id="cs" x="-20%" y="-100%" width="140%" height="300%"><feGaussianBlur stdDeviation="1.5"/></filter></defs>
<path d="M947.8 68L953.5 62.2L959.2 68M949.4 66.8V72.4H957.6V66.8M952.4 72.4V69H954.6V72.4" fill="none" stroke="#e8e8e8" stroke-width="1.2"/>
<ellipse cx="984.5" cy="117.5" rx="20" ry="2.2" fill="#9a9a9a" opacity="0.6" filter="url(#cs)"/>
<path d="M962 82.6L984.3 80L1006.7 82.1L984.5 83.4Z" fill="#f0f0f0" stroke="#c8c8c8" stroke-width="0.5"/>
<path d="M962 82.6L984.3 81.6V117L962 114.4Z" fill="url(#cl)" stroke="#bdbdbd" stroke-width="0.6"/>
<path d="M984.3 81.6L1006.7 82.1V114.4L984.3 117Z" fill="url(#cr)" stroke="#c4c4c4" stroke-width="0.6"/>
<text x="972.8" y="103.4" font-size="14.5" text-anchor="middle" fill="#7c7c7c" font-family="'Liberation Sans','Noto Sans CJK JP',sans-serif">左</text>
<text x="995.8" y="103.2" font-size="14.5" text-anchor="middle" fill="#7c7c7c" font-family="'Liberation Sans','Noto Sans CJK JP',sans-serif">前</text>
<path d="M984.3 117L958.9 115" stroke="#4cd24c" stroke-width="1.3"/>
<path d="M984.3 117L1010.4 115" stroke="#ee3b3b" stroke-width="1.3"/>
<path d="M984.3 73.2V117.4" stroke="#2626f0" stroke-width="1.8"/>
<text x="984.4" y="71.4" font-size="9.5" font-weight="bold" text-anchor="middle" textLength="5.2" lengthAdjust="spacingAndGlyphs" fill="#4a4aea" font-family="'Liberation Sans',sans-serif">Z</text>
<text x="955.4" y="117" font-size="9" font-weight="bold" text-anchor="middle" textLength="5" lengthAdjust="spacingAndGlyphs" fill="#74e274" font-family="'Liberation Sans',sans-serif">Y</text>
<text x="1013.2" y="117" font-size="9" font-weight="bold" text-anchor="middle" textLength="5" lengthAdjust="spacingAndGlyphs" fill="#ee4a4a" font-family="'Liberation Sans',sans-serif">X</text>
<path d="M1011.6 125.6H1019.6M1011.8 127.6L1015.6 131.6L1019.4 127.6Z" fill="none" stroke="#e2e2e2" stroke-width="1"/>
</svg>
</body></html>
